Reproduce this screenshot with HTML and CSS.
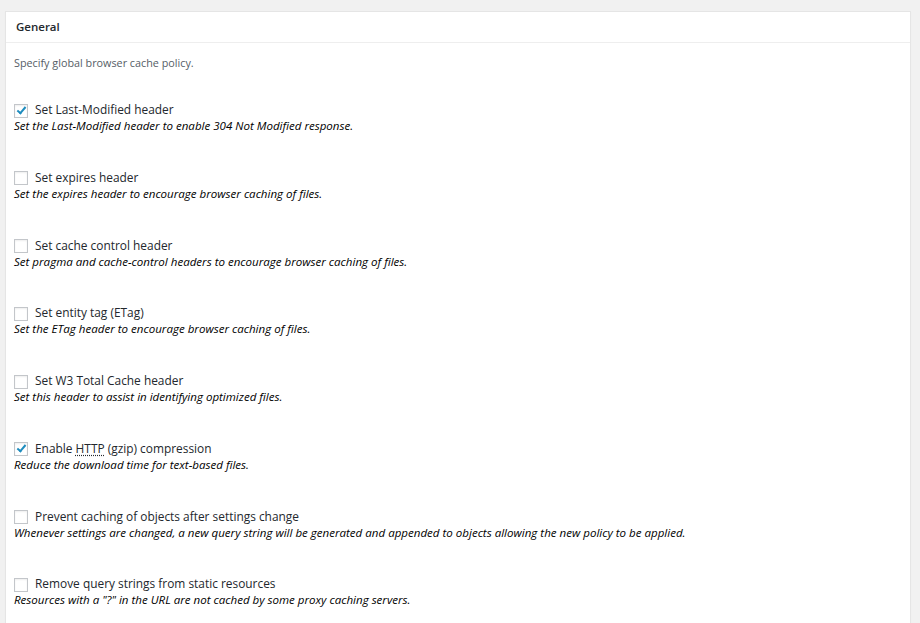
FILE: index.html
```html
<!DOCTYPE html>
<html lang="en">
<head>
<meta charset="utf-8">
<title>General</title>
<link rel="stylesheet" href="styles.css">
</head>
<body>
<div class="postbox">
  <h3 class="hndle">General</h3>
  <div class="inside">
    <p class="intro">Specify global browser cache policy.</p>
    <div class="item">
      <label class="opt"><span class="cb checked"></span><span class="lbl">Set Last-Modified header</span></label>
      <div class="desc">Set the Last-Modified header to enable 304 Not Modified response.</div>
    </div>
    <div class="item">
      <label class="opt"><span class="cb"></span><span class="lbl">Set expires header</span></label>
      <div class="desc">Set the expires header to encourage browser caching of files.</div>
    </div>
    <div class="item">
      <label class="opt"><span class="cb"></span><span class="lbl">Set cache control header</span></label>
      <div class="desc">Set pragma and cache-control headers to encourage browser caching of files.</div>
    </div>
    <div class="item">
      <label class="opt"><span class="cb"></span><span class="lbl">Set entity tag (ETag)</span></label>
      <div class="desc">Set the ETag header to encourage browser caching of files.</div>
    </div>
    <div class="item">
      <label class="opt"><span class="cb"></span><span class="lbl">Set W3 Total Cache header</span></label>
      <div class="desc">Set this header to assist in identifying optimized files.</div>
    </div>
    <div class="item">
      <label class="opt"><span class="cb checked"></span><span class="lbl">Enable <abbr title="Hypertext Transfer Protocol">HTTP</abbr> (gzip) compression</span></label>
      <div class="desc">Reduce the download time for text-based files.</div>
    </div>
    <div class="item">
      <label class="opt"><span class="cb"></span><span class="lbl">Prevent caching of objects after settings change</span></label>
      <div class="desc">Whenever settings are changed, a new query string will be generated and appended to objects allowing the new policy to be applied.</div>
    </div>
    <div class="item">
      <label class="opt"><span class="cb"></span><span class="lbl">Remove query strings from static resources</span></label>
      <div class="desc">Resources with a "?" in the URL are not cached by some proxy caching servers.</div>
    </div>
  </div>
</div>
</body>
</html>
```
FILE: styles.css
```css
html, body {
  margin: 0;
  padding: 0;
  background: #f1f1f1;
  font-family: "Open Sans", "Noto Sans", sans-serif;
  color: #23282d;
}
body {
  padding: 11px 9px 0 5px;
  height: 612px;
  overflow: hidden;
}
.postbox {
  background: #fff;
  border: 1px solid #e5e5e5;
  box-shadow: 0 1px 1px rgba(0,0,0,.04);
  height: 640px;
}
.hndle {
  margin: 0;
  height: 30px;
  line-height: 30px;
  padding: 0 10px;
  font-size: 11.5px;
  font-weight: 600;
  color: #23282d;
  border-bottom: 1px solid #eee;
}
.inside {
  padding: 11px 8px 0 8px;
}
.intro {
  margin: 0 0 28px;
  line-height: 18px;
  font-size: 10.8px;
  color: #555d66;
}
.item {
  height: 67.75px;
}
.opt {
  display: flex;
  align-items: center;
  height: 18px;
  color: #23282d;
}
.lbl {
  font-size: 11.9px;
  white-space: nowrap;
}
.cb {
  flex: none;
  width: 12px;
  height: 12px;
  margin: 3px 7px 0 0;
  border: 1px solid #c3c6ca;
  background: #fff;
  box-shadow: inset 0 1px 2px rgba(0,0,0,.07);
  position: relative;
}
.cb.checked::after {
  content: "";
  position: absolute;
  left: 3.5px;
  top: 0px;
  width: 3px;
  height: 7px;
  border-right: 2px solid #1e8cbe;
  border-bottom: 2px solid #1e8cbe;
  transform: rotate(40deg);
}
abbr {
  text-decoration: underline dotted;
  text-underline-offset: 2px;
}
.desc {
  line-height: 16px;
  font-size: 11.55px;
  font-style: italic;
  color: #000;
}
```
